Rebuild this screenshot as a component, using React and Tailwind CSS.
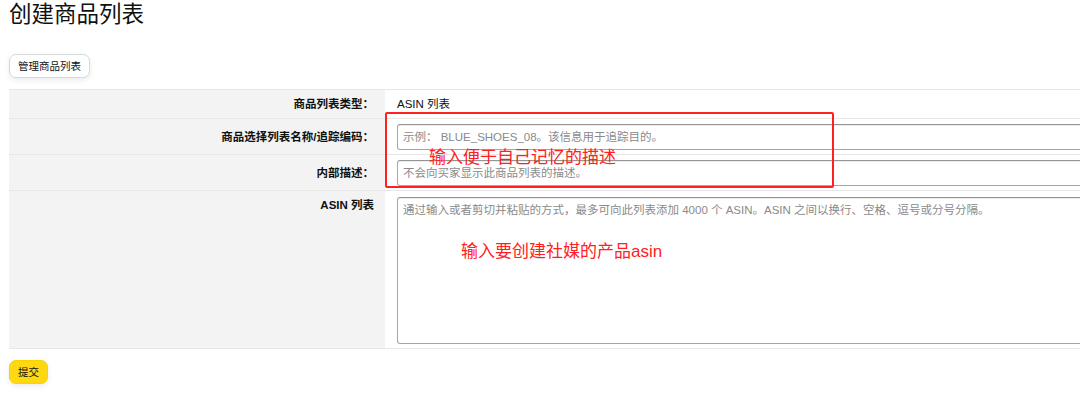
export default function App() {
  return (
    <div className="relative w-[1080px] h-[397px] overflow-hidden bg-white text-[#0f1111] font-['Liberation_Sans','Noto_Sans_CJK_SC',sans-serif]">
      <div className="px-[9px]">
        <h1 className="text-[22.5px] leading-[30px] font-normal">创建商品列表</h1>

        <div className="mt-[23px]">
          <button className="h-[24px] px-[8px] text-[10.5px] leading-[22px] bg-white border border-[#d5d9d9] rounded-[7px] shadow-[0_2px_5px_rgba(213,217,217,0.5)]">
            管理商品列表
          </button>
        </div>

        <div className="mt-[11px] w-[1200px] text-[11.5px] leading-[16px]">
          <div className="grid grid-cols-[376px_1fr] h-[29px] border-t border-[#e7e7e7]">
            <div className="bg-[#f3f3f3] flex items-center justify-end pr-[11px] font-bold">商品列表类型：</div>
            <div className="flex items-center pl-[12px]">ASIN 列表</div>
          </div>

          <div className="grid grid-cols-[376px_1fr] h-[36px] border-t border-[#e7e7e7]">
            <div className="bg-[#f3f3f3] flex items-center justify-end pr-[11px] font-bold">商品选择列表名称/追踪编码：</div>
            <div className="flex items-center pl-[12px]">
              <input
                className="w-full h-[26px] px-[5px] text-[11.5px] border border-[#a6a6a6] border-t-[#949494] rounded-[3px] shadow-[inset_0_1px_0_rgba(0,0,0,0.07)] placeholder:text-[#8a8a8a] outline-none"
                placeholder="示例： BLUE_SHOES_08。该信息用于追踪目的。"
              />
            </div>
          </div>

          <div className="grid grid-cols-[376px_1fr] h-[36px] border-t border-[#e7e7e7]">
            <div className="bg-[#f3f3f3] flex items-center justify-end pr-[11px] font-bold">内部描述：</div>
            <div className="flex items-center pl-[12px]">
              <input
                className="w-full h-[26px] px-[5px] text-[11.5px] border border-[#a6a6a6] border-t-[#949494] rounded-[3px] shadow-[inset_0_1px_0_rgba(0,0,0,0.07)] placeholder:text-[#8a8a8a] outline-none"
                placeholder="不会向买家显示此商品列表的描述。"
              />
            </div>
          </div>

          <div className="grid grid-cols-[376px_1fr] h-[159px] border-t border-b border-[#e7e7e7]">
            <div className="bg-[#f3f3f3] flex justify-end pt-[6px] pr-[11px] font-bold">ASIN 列表</div>
            <div className="pt-[6px] pl-[12px]">
              <textarea
                className="block w-full h-[147px] px-[5px] pt-[4px] text-[11.5px] leading-[16px] resize-none border border-[#a6a6a6] border-t-[#949494] rounded-[3px] shadow-[inset_0_1px_0_rgba(0,0,0,0.07)] placeholder:text-[#8a8a8a] outline-none"
                placeholder="通过输入或者剪切并粘贴的方式，最多可向此列表添加 4000 个 ASIN。ASIN 之间以换行、空格、逗号或分号分隔。"
              />
            </div>
          </div>
        </div>

        <div className="mt-[10px]">
          <button className="h-[24px] px-[8px] text-[10.5px] leading-[22px] bg-[#ffd814] border border-[#fcd200] rounded-[7px] shadow-[0_2px_5px_rgba(213,217,217,0.5)]">
            提交
          </button>
        </div>
      </div>

      {/* red annotations drawn over the form */}
      <div className="absolute left-[385px] top-[112px] w-[449px] h-[76px] border-2 border-[#ff2020] rounded-[2px]" />
      <div className="absolute left-[429px] top-[147px] text-[17px] leading-[22px] text-[#ff2020]">输入便于自己记忆的描述</div>
      <div className="absolute left-[461px] top-[241px] text-[17px] leading-[22px] text-[#ff2020]">输入要创建社媒的产品asin</div>
    </div>
  );
}
